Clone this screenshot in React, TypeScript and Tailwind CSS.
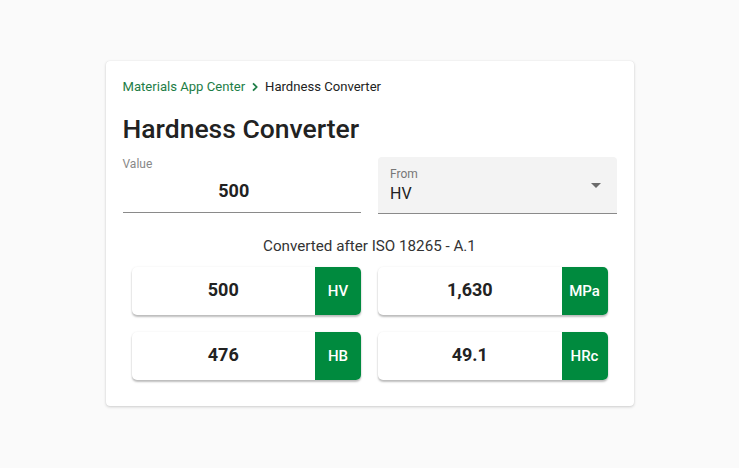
import React from "react";

function ResultCard({ value, unit }: { value: string; unit: string }) {
  return (
    <div className="flex h-[48px] rounded-[5px] bg-white shadow-[0_2px_2px_rgba(0,0,0,0.25),0_0_2px_rgba(0,0,0,0.08)]">
      <div className="flex flex-1 items-center justify-center pb-[3px] text-[18px] font-bold text-[#222]">{value}</div>
      <div className="flex w-[46px] items-center justify-center rounded-r-[5px] bg-[#008a3e] text-[15px] font-medium text-white">{unit}</div>
    </div>
  );
}

export default function App() {
  return (
    <div className="min-h-screen bg-[#fafafa] pt-[61px]" style={{ fontFamily: "Roboto, 'Noto Sans', sans-serif" }}>
      <div className="mx-auto w-[528px] rounded-[4px] bg-white px-[17px] pb-[26px] pt-[16px] shadow-[0_1px_3px_rgba(0,0,0,0.18),0_0_1px_rgba(0,0,0,0.1)]">
        <div className="flex h-5 items-center text-[13.1px]">
          <span className="text-[#1d7d46]">Materials App Center</span>
          <svg width="16" height="16" viewBox="0 0 24 24" className="mx-[2px]">
            <path d="M9 6.5 14.5 12 9 17.5" fill="none" stroke="#1d7d46" strokeWidth="2.6" />
          </svg>
          <span className="text-[#222]">Hardness Converter</span>
        </div>
        <h1 className="mt-4 text-[26.5px] font-medium leading-8 text-[#222]">Hardness Converter</h1>
        <div className="mt-[12px] grid grid-cols-2 gap-[17px]">
          <div className="flex h-[56px] flex-col border-b border-[#8a8a8a]">
            <div className="text-[12px] leading-[14px] text-[#888]">Value</div>
            <div className="mt-[8px] pr-4 text-center text-[18px] font-bold leading-[24px] text-[#222]">500</div>
          </div>
          <div className="relative flex h-[57px] flex-col rounded-t-[4px] border-b border-[#8a8a8a] bg-[#f3f3f3] px-3 pt-[10px]">
            <div className="text-[12px] leading-[14px] text-[#777]">From</div>
            <div className="mt-[3px] text-[16px] leading-[20px] text-[#222]">HV</div>
            <svg width="24" height="24" viewBox="0 0 24 24" className="absolute right-[9px] top-[16px]">
              <path d="M7 10l5 5 5-5z" fill="#6b6b6b" />
            </svg>
          </div>
        </div>
        <div className="mt-[20px] text-center text-[15.2px] leading-6 text-[#333]">Converted after ISO 18265 - A.1</div>
        <div className="mt-[9px] grid grid-cols-2 gap-[17px] px-[9px]">
          <ResultCard value="500" unit="HV" />
          <ResultCard value="1,630" unit="MPa" />
          <ResultCard value="476" unit="HB" />
          <ResultCard value="49.1" unit="HRc" />
        </div>
      </div>
    </div>
  );
}
